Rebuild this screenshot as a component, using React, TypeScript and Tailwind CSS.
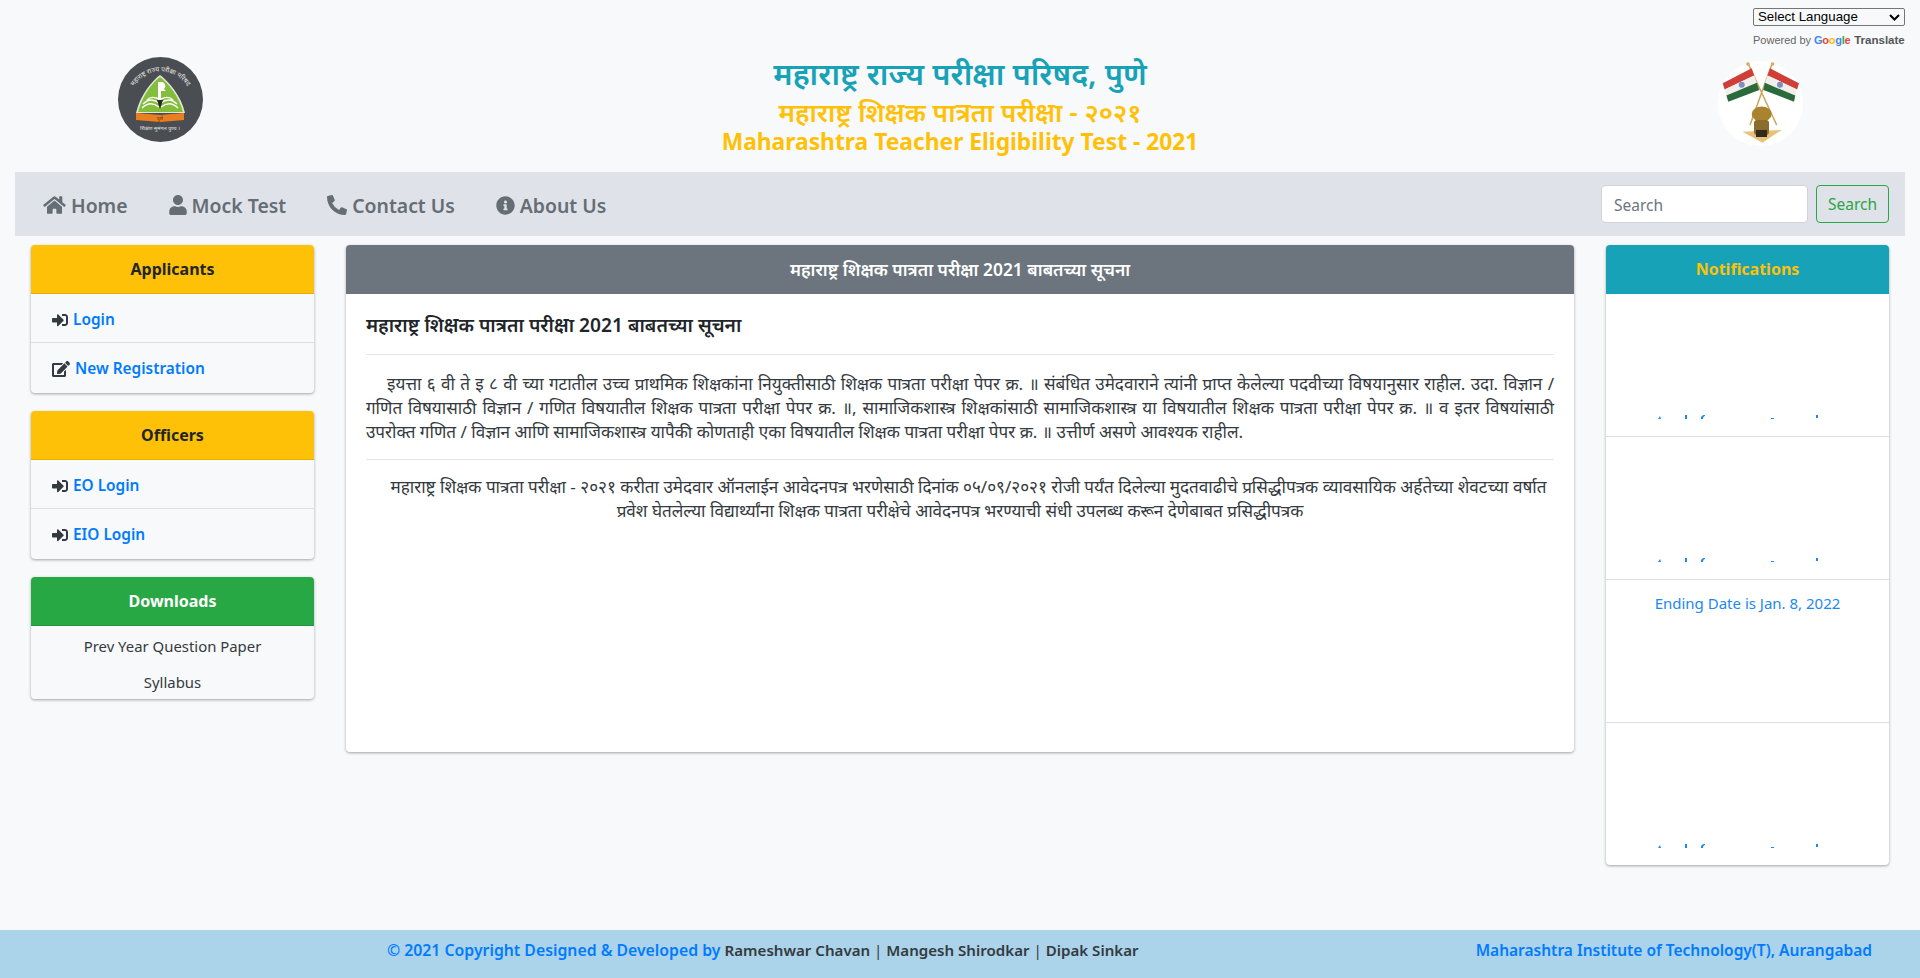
import { FaHome, FaUser, FaPhoneAlt, FaInfoCircle, FaSignInAlt, FaEdit } from "react-icons/fa";

const navItems = [
    { label: "Home", icon: <FaHome className="w-[23px] h-5" /> },
    { label: "Mock Test", icon: <FaUser className="w-[18px] h-5" /> },
    { label: "Contact Us", icon: <FaPhoneAlt className="w-5 h-5" /> },
    { label: "About Us", icon: <FaInfoCircle className="w-[19px] h-[19px]" /> },
];

const StateLogo = () => (
    <svg viewBox="0 0 85 85" className="w-[85px] h-[85px]">
        <defs>
            <path id="logoArc" d="M11 46 A31.5 31.5 0 0 1 74 46" />
        </defs>
        <circle cx="42.5" cy="42.5" r="42.5" fill="#4a4d52" />
        <text fontSize="6.5" fill="#e8e8e8" fontFamily="'Noto Sans Devanagari','Noto Sans',sans-serif">
            <textPath href="#logoArc" startOffset="50%" textAnchor="middle">महाराष्ट्र राज्य परीक्षा परिषद</textPath>
        </text>
        <path d="M42 18 C50 24 63 38 67 56 L18 56 C22 38 34 24 42 18Z" fill="#dfe8d5" />
        <path d="M42 20 C50 26 61 39 65 55 L20 55 C24 39 34 26 42 20Z" fill="#83bd3c" />
        <path d="M24 51 C30 45 36 46 41 50 M25 47 C31 41 36 42 41 46 M29 43 C33 39 37 40 41 42 M60 51 C54 45 48 46 43 50 M59 47 C53 41 48 42 43 46 M55 43 C51 39 47 40 43 42" stroke="#fff" strokeWidth="1.4" fill="none" />
        <path d="M40 25 h3 a4 4 0 0 1 3 7 l2 2 h-5 v9 h-3z" fill="#fff" />
        <path d="M39 43 h6 l-3 9z" fill="#26292b" />
        <path d="M18 56 L42 58 L66 56 L66 63 L42 65 L18 63Z" fill="#ec7f1d" />
        <text x="42" y="63" textAnchor="middle" fontSize="4.5" fill="#43310f" fontFamily="'Noto Sans Devanagari','Noto Sans',sans-serif">पुणे</text>
        <text x="42" y="73" textAnchor="middle" fontSize="5.2" fill="#e6e6e6" fontFamily="'Noto Sans Devanagari','Noto Sans',sans-serif">शिक्षण सुमंगल पुण्य ।</text>
    </svg>
);

const FlagsLogo = () => (
    <svg viewBox="0 0 85 85" className="w-[85px] h-[85px]">
        <circle cx="42.5" cy="42.5" r="42.5" fill="#fff" />
        <path d="M30.3 3 L58.7 64 M54 3 L32 64" stroke="#cda95e" strokeWidth="1.6" />
        <circle cx="30" cy="3" r="1.8" fill="#d5ab5f" />
        <circle cx="54.5" cy="3" r="1.8" fill="#d5ab5f" />
        <path d="M4.7 22.3 L33.7 7.3 L36.2 14.5 L6.6 28.4Z" fill="#cf3f38" />
        <path d="M6.6 28.4 L36.2 14.5 L38.8 21.8 L8.4 34.6Z" fill="#f1efec" />
        <path d="M8.4 34.6 L38.8 21.8 L41.3 29 L10.3 40.7Z" fill="#2b6a3b" />
        <circle cx="23.7" cy="23.7" r="3" fill="#7c8fc3" />
        <path d="M81 22.3 L52 7.3 L49.5 14.5 L79.1 28.4Z" fill="#cf3f38" />
        <path d="M79.1 28.4 L49.5 14.5 L46.9 21.8 L77.3 34.6Z" fill="#f1efec" />
        <path d="M77.3 34.6 L46.9 21.8 L45.3 29 L76 40.7Z" fill="#2b6a3b" />
        <circle cx="62" cy="23.7" r="3" fill="#7c8fc3" />
        <path d="M24.7 70.7 L63.7 69 L44.3 81.7Z" fill="#e6c27a" />
        <ellipse cx="43.7" cy="53" rx="10" ry="7.5" fill="#a9842f" />
        <rect x="36" y="59" width="15" height="15" rx="3" fill="#8a6d2c" />
        <rect x="38" y="69" width="11" height="7" fill="#33291a" />
    </svg>
);

const Card = ({ title, headerClass, children }: { title: string; headerClass: string; children: React.ReactNode }) => (
    <div className="rounded-[4px] overflow-hidden shadow-[0_1px_3px_rgba(0,0,0,0.35)] bg-[#f8f9fa]">
        <div className={`h-[49px] flex items-center justify-center text-base font-bold border-b border-black/10 ${headerClass}`}>{title}</div>
        {children}
    </div>
);

const LinkRow = ({ icon, label }: { icon: React.ReactNode; label: string }) => (
    <div className="h-[49px] [&:nth-child(2)]:pt-[4px] last:pt-[2px] flex items-center gap-[5px] pl-[21px] border-b last:border-b-0 last:h-[50px] border-[#dfdfdf] text-[#343a40]">
        {icon}
        <span className="text-[#007bff] font-semibold text-[15.4px]">{label}</span>
    </div>
);

const Specks = () => (
    <div className="flex justify-center pr-[15px]">
        <svg width="164" height="4" viewBox="0 0 164 4">
            <path d="M0 4h3l-1-3zM27 0h2v4h-2zM43 4c0-3 1-4 4-4v1c-1 0-2 1-2 3zM113 3h3v1h-3zM158 0h2v3h-2z" fill="#1e88f0" />
        </svg>
    </div>
);

export default function App() {
    const font = "font-['Noto_Sans','Noto_Sans_Devanagari',sans-serif]";
    return (
        <div className={`min-h-[978px] flex flex-col bg-[#f8f9fa] text-[#343a40] ${font}`}>
            <header className="h-[172px] flex">
                <div className="w-[400px] pl-[118px] pt-[57px]">
                    <StateLogo />
                </div>
                <div className="flex-1 text-center pt-[52px]">
                    <h1 className="text-[30.7px] leading-[42px] font-semibold text-[#17a2b8]">महाराष्ट्र राज्य परीक्षा परिषद, पुणे</h1>
                    <h2 className="text-[26.2px] leading-[36px] font-semibold text-[#ffc107]">महाराष्ट्र शिक्षक पात्रता परीक्षा - २०२१</h2>
                    <h2 className="text-[22.8px] leading-[24px] font-bold text-[#ffc107]">Maharashtra Teacher Eligibility Test - 2021</h2>
                </div>
                <div className="w-[400px] pr-[15px] pt-2 flex flex-col items-end">
                    <div className="w-[152px] h-[18px] border border-[#767676] rounded-[2px] flex items-center justify-between px-1 font-['Liberation_Sans',sans-serif] text-[13.3px] text-black">
                        <span>Select Language</span>
                        <svg width="11" height="7" viewBox="0 0 11 7"><path d="M1 1l4.5 4.5L10 1" fill="none" stroke="#000" strokeWidth="2" /></svg>
                    </div>
                    <div className="mt-[6px] w-[152px] flex items-center font-['Liberation_Sans',sans-serif] text-[11px] leading-[16px] text-[#666] whitespace-nowrap">
                        <span>Powered by</span>
                        <span className="ml-[3px] font-semibold tracking-[-0.3px]">
                            <span className="text-[#4285f4]">G</span><span className="text-[#ea4335]">o</span><span className="text-[#fbbc05]">o</span><span className="text-[#4285f4]">g</span><span className="text-[#34a853]">l</span><span className="text-[#ea4335]">e</span>
                        </span>
                        <span className="ml-1 text-[11.5px] font-bold text-[#555]">Translate</span>
                    </div>
                    <div className="mt-[13px] mr-[102px]">
                        <FlagsLogo />
                    </div>
                </div>
            </header>

            <nav className="mx-[15px] h-16 bg-[#dfe2e9] flex items-center pl-[28px] pr-4">
                <ul className="flex gap-[41px] flex-1 pt-[3px] text-[#666d74]">
                    {navItems.map((item) => (
                        <li key={item.label} className="flex items-center gap-[5px] text-[19.4px] font-semibold">
                            {item.icon}
                            <span>{item.label}</span>
                        </li>
                    ))}
                </ul>
                <input
                    className="w-[207px] h-[38px] bg-white border border-[#ced4da] rounded-[4px] px-3 pt-[1px] text-[15.5px] placeholder-[#6c757d] outline-none"
                    placeholder="Search"
                />
                <button className="ml-2 w-[73px] h-[38px] pt-[1px] border border-[#28a745] rounded-[4px] text-[#28a745] text-[15.5px]">Search</button>
            </nav>

            <main className="flex-1 flex gap-8 px-[31px] pt-[9px] items-start">
                <aside className="w-[283px] flex flex-col gap-[18px]">
                    <Card title="Applicants" headerClass="bg-[#ffc107] text-[#212529]">
                        <LinkRow icon={<FaSignInAlt className="w-4 h-4" />} label="Login" />
                        <LinkRow icon={<FaEdit className="w-[18px] h-4" />} label="New Registration" />
                    </Card>
                    <Card title="Officers" headerClass="bg-[#ffc107] text-[#212529]">
                        <LinkRow icon={<FaSignInAlt className="w-4 h-4" />} label="EO Login" />
                        <LinkRow icon={<FaSignInAlt className="w-4 h-4" />} label="EIO Login" />
                    </Card>
                    <Card title="Downloads" headerClass="bg-[#28a745] text-white">
                        <div className="h-[73px] flex flex-col items-center pt-[2px] text-[14.9px]">
                            <a className="leading-[36px]">Prev Year Question Paper</a>
                            <a className="leading-[36px]">Syllabus</a>
                        </div>
                    </Card>
                </aside>

                <section className="flex-1 h-[507px] bg-white rounded-[4px] overflow-hidden shadow-[0_1px_3px_rgba(0,0,0,0.35)]">
                    <div className="h-[49px] bg-[#6c757d] text-white font-semibold flex items-center justify-center text-[17.4px]">
                        महाराष्ट्र शिक्षक पात्रता परीक्षा 2021 बाबतच्या सूचना
                    </div>
                    <div className="px-5 pt-[16px]">
                        <h5 className="text-[19.2px] leading-[30px] font-semibold text-[#212529]">महाराष्ट्र शिक्षक पात्रता परीक्षा 2021 बाबतच्या सूचना</h5>
                        <hr className="mt-[14px] border-[#e5e5e5]" />
                        <p className="mt-[17px] text-[17.1px] leading-6 text-justify indent-[21px]">
                            इयत्ता ६ वी ते इ ८ वी च्या गटातील उच्च प्राथमिक शिक्षकांना नियुक्तीसाठी शिक्षक पात्रता परीक्षा पेपर क्र. ॥ संबंधित उमेदवाराने त्यांनी प्राप्त केलेल्या पदवीच्या विषयानुसार राहील. उदा. विज्ञान / गणित विषयासाठी विज्ञान / गणित विषयातील शिक्षक पात्रता परीक्षा पेपर क्र. ॥, सामाजिकशास्त्र शिक्षकांसाठी सामाजिकशास्त्र या विषयातील शिक्षक पात्रता परीक्षा पेपर क्र. ॥ व इतर विषयांसाठी उपरोक्त गणित / विज्ञान आणि सामाजिकशास्त्र यापैकी कोणताही एका विषयातील शिक्षक पात्रता परीक्षा पेपर क्र. ॥ उत्तीर्ण असणे आवश्यक राहील.
                        </p>
                        <hr className="mt-[15px] border-[#e5e5e5]" />
                        <p className="mt-[15px] text-[17.1px] leading-6 text-center indent-[17px]">
                            महाराष्ट्र शिक्षक पात्रता परीक्षा - २०२१ करीता उमेदवार ऑनलाईन आवेदनपत्र भरणेसाठी दिनांक ०५/०९/२०२१ रोजी पर्यंत दिलेल्या मुदतवाढीचे प्रसिद्धीपत्रक व्यावसायिक अर्हतेच्या शेवटच्या वर्षात प्रवेश घेतलेल्या विद्यार्थ्यांना शिक्षक पात्रता परीक्षेचे आवेदनपत्र भरण्याची संधी उपलब्ध करून देणेबाबत प्रसिद्धीपत्रक
                        </p>
                    </div>
                </section>

                <aside className="w-[283px] bg-white rounded-[4px] overflow-hidden shadow-[0_1px_3px_rgba(0,0,0,0.35)]">
                    <div className="h-[49px] pb-[2px] bg-[#17a2b8] text-[#ffc107] font-bold flex items-center justify-center text-base">Notifications</div>
                    {[0, 1, 2, 3].map((n) => (
                        <div key={n} className={`${n > 0 ? "h-[143px] border-t border-[#dfdfdf]" : "h-[142px]"} ${n === 2 ? "pt-3" : "pt-[121px]"} text-center text-[#1e88f0] text-[15px]`}>
                            {n === 2 ? "Ending Date is Jan. 8, 2022" : <Specks />}
                        </div>
                    ))}
                </aside>
            </main>

            <footer className="h-12 bg-[#abd3ea] flex items-center pl-[387px] pr-[48px] pb-[7px] font-semibold">
                <div className="flex-1">
                    <span className="text-[#007bff] text-[15.8px]">© 2021 Copyright Designed &amp; Developed by </span>
                    <span className="text-[#343a40] text-[15.1px]">Rameshwar Chavan <span className="font-normal">|</span> Mangesh Shirodkar <span className="font-normal">|</span> Dipak Sinkar</span>
                </div>
                <div className="text-[#007bff] text-[15.5px]">Maharashtra Institute of Technology(T), Aurangabad</div>
            </footer>
        </div>
    );
}
